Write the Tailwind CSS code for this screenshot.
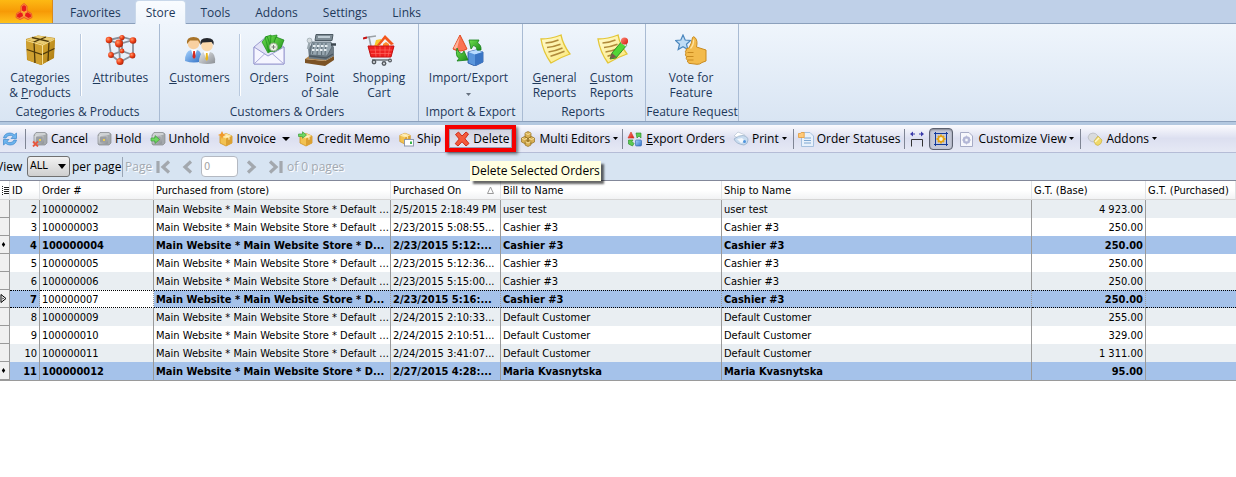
<!DOCTYPE html>
<html lang="en">
<head>
  <meta charset="UTF-8" />
  <title>Store Manager - Orders</title>
  <meta name="viewport" content="width=device-width, initial-scale=1" />
  <script src="https://cdn.jsdelivr.net/npm/@tailwindcss/browser@4"></script>
</head>
<body class="bg-white min-h-screen font-['Open_Sans','Noto_Sans',sans-serif] text-xs text-[#1e395b] overflow-x-hidden">

  <!-- Icon gradients -->
  <svg class="absolute w-0 h-0" aria-hidden="true">
    <defs>
      <linearGradient id="gold" x1="0" y1="0" x2="1" y2="1"><stop offset="0" stop-color="#dcae35" /><stop offset="1" stop-color="#a8770f" /></linearGradient>
      <radialGradient id="ball" cx=".35" cy=".35" r=".7"><stop offset="0" stop-color="#ff9a6a" /><stop offset=".5" stop-color="#f2441a" /><stop offset="1" stop-color="#a92208" /></radialGradient>
      <linearGradient id="silver" x1="0" y1="0" x2="1" y2="1"><stop offset="0" stop-color="#e4e6e8" /><stop offset="1" stop-color="#8b8f94" /></linearGradient>
      <linearGradient id="green" x1="0" y1="0" x2="1" y2="1"><stop offset="0" stop-color="#6fe04f" /><stop offset="1" stop-color="#1c8c1a" /></linearGradient>
      <linearGradient id="red" x1="0" y1="0" x2="1" y2="1"><stop offset="0" stop-color="#ff8a78" /><stop offset="1" stop-color="#d5180c" /></linearGradient>
      <linearGradient id="blue" x1="0" y1="0" x2="1" y2="1"><stop offset="0" stop-color="#a8d4ff" /><stop offset="1" stop-color="#2f6fc4" /></linearGradient>
      <linearGradient id="note" x1="0" y1="0" x2="1" y2="1"><stop offset="0" stop-color="#fffbd0" /><stop offset="1" stop-color="#fbe778" /></linearGradient>
      <symbol id="i-box" viewBox="0 0 16 16">
        <path d="M2 5 8 2.500l6 2.500v7L8 15l-6-3z" fill="#f2c251" stroke="#cf9526" stroke-width=".8" />
        <path d="M2 5l6 2.500L14 5 8 2.500z" fill="#fde6a0" />
        <path d="M8 7.500 14 5v7l-6 3z" fill="#dca132" />
        <path d="M5 3.800 11 6.200v2.500" fill="none" stroke="#fff4cf" />
      </symbol>
      <symbol id="i-safe" viewBox="0 0 16 16">
        <path d="M2 4 4 1.500h9L15 3v9l-2 2H3l-1-1z" fill="#a4a8ab" stroke="#868a8e" stroke-width=".7" />
        <path d="M2.500 4 4.300 2h8.500L14 3.200 12.500 4z" fill="#cfd2d4" />
        <rect x="2.500" y="4" width="9.500" height="9" rx="1.500" fill="url(#silver)" />
        <rect x="4" y="5.500" width="6.500" height="6" rx="1" fill="#9b9ea1" />
        <rect x="7" y="8" width="2" height="2" fill="#f1cf4e" />
      </symbol>
      <symbol id="i-note" viewBox="0 0 32 32">
        <path d="M2 5Q12 5 22 1q2 10 9 19-9 3-19 9Q4 18 2 5z" fill="url(#note)" stroke="#e3c637" stroke-width="1.300" />
        <path d="M6.500 9q7-.5 13-3M8 13.500q7-.7 13.500-3.200M9.500 18q7-1 14-4M11.500 22.300q7-2.200 14-5" fill="none" stroke="#b08a3a" stroke-width="1.500" />
      </symbol>
    </defs>
  </svg>

  <!-- Ribbon tabs -->
  <nav class="flex h-6 gap-[3px] bg-[#bfd0e8] border-b border-[#8ba0bc]">
    <button aria-label="Application menu" class="w-[53px] h-[23px] mr-[3px] flex items-center justify-center pr-1 bg-linear-to-b from-[#fdb913] via-[#f79a06] to-[#ffc21c] border-r border-[#d98a1d]">
      <svg class="w-[18px] h-[18px]" viewBox="0 0 18 18">
        <g fill="#f6953a" stroke="#ee5a2a"><path d="M6 8V3l3-2.500L12 3v5l4.500 2.500.5 4-4 2-4-2-4 2-4-2 .5-4z" /></g>
        <g fill="#e81c1c"><path d="M7 7.500v-4L9 2l2 1.500v4L9 9z" /><path d="M7.500 10.500 8 13l-3.500 2L2 13.800l.3-2.600L5.500 9.200z" /><path d="M10.500 10.500 10 13l3.500 2 2.500-1.200-.3-2.600-3.200-2z" /></g>
        <path d="M9 9.500V13M9 9.500 6.500 8M9 9.500 11.500 8" stroke="#ffb52a" fill="none" />
      </svg>
    </button>
    <button class="h-6 px-[11px] pt-0.5">Favorites</button>
    <button class="h-6 px-2.5 pt-px rounded-t bg-linear-to-b from-[#f9fcff] to-[#eff5fc] border-x border-t border-[#c9d8ea]">Store</button>
    <button class="h-6 px-[11px] pt-0.5">Tools</button>
    <button class="h-6 px-[11px] pt-0.5">Addons</button>
    <button class="h-6 px-[11px] pt-0.5">Settings</button>
    <button class="h-6 px-[11px] pt-0.5">Links</button>
  </nav>

  <!-- Ribbon -->
  <div class="flex h-[98px] bg-linear-to-b from-[#eff5fc] to-[#d9e5f3] border-b border-[#8ba0bc] leading-[15px]">

    <section class="w-40 flex flex-col border-r border-[#a9bbd3] pt-2.5">
      <div class="flex h-[70px]">
        <button class="w-20 flex flex-col items-center gap-1">
          <svg class="w-8 h-8" viewBox="0 0 32 32">
            <path d="M2 5 14 1.500 31 4l-1 20-13 7L3 26z" fill="#b98718" />
            <path d="M2 5.500 14 1.500l17 3-12 6z" fill="#e9cc72" />
            <path d="M2 5.500l17 5L17 31 3.500 26z" fill="#cfa030" />
            <path d="M19 10.500 31 4.500 29.500 24 17 31z" fill="url(#gold)" />
            <path d="M8 3.500 25 7.500l-1 19.500M22 3 10 8l1 21M2.800 15.500 18 20.500l12.500-6" fill="none" stroke="#4f3a0a" stroke-width="1.300" />
            <path d="M2.500 6.500 18.500 11.200 30.500 5.200M18.500 11v19" fill="none" stroke="#f9e6a0" stroke-width=".9" />
          </svg>
          <span>Categories<br />&amp; <u>P</u>roducts</span>
        </button>
        <div class="w-px h-[62px] bg-[#b9c9de] border-r border-white box-content"></div>
        <button class="w-[77px] flex flex-col items-center gap-1">
          <svg class="w-8 h-8" viewBox="0 0 32 32">
            <g stroke="#8a9099" stroke-width="1.800" fill="none">
              <path d="M4 6 17 3l11 3-14 4zM4 6l2 15 9 7 13-7V6M14 10l1 18M17 3v14L6 21M17 17l11 4" />
            </g>
            <g fill="url(#ball)">
              <circle cx="17" cy="3.500" r="2.600" /><circle cx="17" cy="17" r="2.400" /><circle cx="4" cy="6" r="3.300" /><circle cx="28" cy="6.500" r="3.300" />
              <circle cx="6" cy="21" r="2.900" /><circle cx="27.500" cy="21.500" r="2.900" /><circle cx="14" cy="9.500" r="4" /><circle cx="15" cy="27.500" r="3.600" />
            </g>
          </svg>
          <span><u>A</u>ttributes</span>
        </button>
      </div>
      <div class="text-center pr-1">Categories &amp; Products</div>
    </section>

    <section class="w-[259px] flex flex-col border-r border-[#a9bbd3] pt-2.5">
      <div class="flex h-[70px]">
        <button class="w-[79px] flex flex-col items-center gap-1">
          <svg class="w-8 h-8" viewBox="0 0 32 32">
            <path d="M1 27q0-10 6-11h6q5 1 5 11-8 3-17 0z" fill="url(#blue)" />
            <path d="M7 15.500l3 9 3-9z" fill="#fff" /><path d="M9.300 17h1.600l.7 6-1.600 2-1.500-2z" fill="#d7261b" />
            <circle cx="9.500" cy="9.500" r="5.800" fill="#f8d0a0" />
            <path d="M3 10Q2 3 9.500 3T16 10l-2-3.500H6z" fill="#a8742a" />
            <path d="M15 29q0-10 5-11h6q6 1 5 11-8 2-16 0z" fill="url(#silver)" />
            <path d="M19.500 17.500l3.200 9 3.300-9z" fill="#fff" /><path d="M22 19h1.600l.6 6-1.400 2-1.400-2z" fill="#e9b61c" />
            <circle cx="23" cy="11.500" r="5.800" fill="#fbd9ac" />
            <path d="M16.500 11Q15 4 23 4t6.500 7l-2-3-9 .5z" fill="#25282d" />
          </svg>
          <span><u>C</u>ustomers</span>
        </button>
        <div class="w-px h-[62px] bg-[#b9c9de] border-r border-white box-content"></div>
        <button class="w-14 flex flex-col items-center gap-1">
          <svg class="w-8 h-8" viewBox="0 0 32 32">
            <path d="M1 13 13 3l18 10v17H1z" fill="#e2e2f6" stroke="#9a9ad0" />
            <path d="M9 8 14 2l5 14-4 3zM12 3l6-2 4 15-6 2z" fill="url(#green)" stroke="#1c8c1a" stroke-width=".7" />
            <path d="M18 2l6-1-2 14-5 2z" fill="url(#green)" stroke="#1c8c1a" stroke-width=".7" />
            <path d="M23 3l8 3-5 13-8-2z" fill="url(#green)" stroke="#158014" stroke-width=".7" />
            <circle cx="20.500" cy="13" r="4" fill="#e9f4e3" stroke="#98ac90" /><path d="M18.500 13h4M20.500 11v4" stroke="#777" />
            <path d="M1 13l14 9 16-9v17H1z" fill="#f5f5ff" stroke="#9a9ad0" />
            <path d="M1 30 12 19.500M31 30 19 19.500" stroke="#a9a9d8" />
          </svg>
          <span>O<u>r</u>ders</span>
        </button>
        <button class="w-[46px] flex flex-col items-center gap-1">
          <svg class="w-8 h-8" viewBox="0 0 32 32">
            <path d="M1 25l20 2 9-5v4l-9 6-20-3z" fill="#7c5325" /><path d="M1 25 8 20l22 2-9 5z" fill="#b4874e" />
            <path d="M4 14 9 9h17l4 4v9l-8 4-17-1.500z" fill="#6f7c86" />
            <path d="M12 .5h17l-1 6H11z" fill="#7f8d96" stroke="#4d5a63" /><path d="M14 3h12" stroke="#d6e3ea" stroke-width="1.500" />
            <path d="M8 8h19l1 5-5 9-17-1z" fill="#97a6b0" stroke="#56646e" stroke-width=".8" />
            <path d="M10 9l-1.500 11M14 9l-1 12M18 9l-.5 12M22 9l-1 12" stroke="#5d6c76" />
            <path d="M9 12h16M8 16h15" stroke="#e6edf1" stroke-width="1.800" stroke-dasharray="2.500 1.500" />
            <path d="M6 7 4 15" stroke="#9aa7af" stroke-width="2.500" /><circle cx="5.500" cy="6.500" r="2.400" fill="#d3dade" stroke="#8b989f" stroke-width=".6" />
            <path d="M27 10.500h5" stroke="#3c4750" stroke-width="2.500" />
            <path d="M5 22l17 2 7-4" fill="none" stroke="#4c5861" stroke-width="1.300" />
          </svg>
          <span>Point<br />of Sale</span>
        </button>
        <button class="w-[72px] flex flex-col items-center gap-1">
          <svg class="w-8 h-8" viewBox="0 0 32 32">
            <path d="M1 4l5-1 4 19h18" fill="none" stroke="#9aa0a6" stroke-width="1.600" /><path d="M0 4.500l4-1" stroke="#c81414" stroke-width="2" />
            <path d="M6 3 13 2" stroke="#9aa0a6" stroke-width="1.500" />
            <path d="M11 13 13 6l5-1 1 8z" fill="#f9c82a" />
            <path d="M16 11 24 2l7 8-3 6H17z" fill="#f3f3f3" /><path d="M14 11 22 1l9 9-3 1-6-6-5 6z" fill="#f2561d" /><path d="M20 14v-4l3-2 3 2v4z" fill="#ff8a2d" />
            <path d="M5 12h26l-3 11H8z" fill="#ee2020" stroke="#c41010" />
            <path d="M7 16h22M8 19.500h20M12 12.500l1 10M17 12.500v10M22 12.500v10M27 12.500l-2 10" stroke="#ff6a62" stroke-width=".7" />
            <path d="M9 26h18" stroke="#8a9096" stroke-width="2" />
            <g fill="#555a60"><circle cx="11" cy="28" r="2.400" /><circle cx="21" cy="29.500" r="2.400" /><circle cx="27" cy="26.500" r="2" /></g>
            <g fill="#dfe3e6"><circle cx="11" cy="28" r="1" /><circle cx="21" cy="29.500" r="1" /><circle cx="27" cy="26.500" r=".8" /></g>
          </svg>
          <span>Shopping<br />Cart</span>
        </button>
      </div>
      <div class="text-center pr-1">Customers &amp; Orders</div>
    </section>

    <section class="w-[104px] flex flex-col border-r border-[#a9bbd3] pt-2.5">
      <div class="flex justify-center h-[70px] pr-1">
        <button class="flex flex-col items-center gap-1">
          <svg class="w-8 h-8" viewBox="0 0 32 32">
            <path d="M8 1 15 15q-7 4-14 0z" fill="#fa7352" stroke="#e0481e" />
            <path d="M8 2 5 15q-2 0-3.500-.7z" fill="#ffb39c" />
            <path d="M16 18l8-2 7 2v10l-8 4-7-3z" fill="#5a96dc" stroke="#1d4fa0" stroke-width=".8" /><path d="M16 18l7 2.500 8-2.500-7-2z" fill="#b9dcff" /><path d="M23 20.500V31.500l8-3.500V18z" fill="#3a75c4" />
            <path d="M17 6h10l-1.500 3q4 2 3.500 7h-4q0-4-3.500-4.500L19 15z" fill="url(#green)" stroke="#16801a" stroke-width=".8" />
            <path d="M5 14q1 5 5 6l2-3 4 9-11 1 2-2.500Q3 22 5 14z" fill="url(#green)" stroke="#16801a" stroke-width=".8" />
          </svg>
          <span>Import/Export</span>
          <svg class="w-[5px] h-[3px] mt-1" viewBox="0 0 5 3"><path d="M0 0h5L2.500 3z" fill="#66717f" /></svg>
        </button>
      </div>
      <div class="text-center">Import &amp; Export</div>
    </section>

    <section class="w-[123px] flex flex-col border-r border-[#a9bbd3] pt-2.5">
      <div class="flex justify-center h-[70px] pr-0.5">
        <button class="w-[57px] flex flex-col items-center gap-1">
          <svg class="w-8 h-8"><use href="#i-note" /></svg>
          <span><u>G</u>eneral<br />Reports</span>
        </button>
        <button class="w-[57px] flex flex-col items-center gap-1">
          <svg class="w-8 h-8" viewBox="0 0 32 32">
            <use href="#i-note" width="32" height="32" />
            <path d="M14 25l2-6L26 7l5 4-11 13z" fill="#52d636" stroke="#1c7a18" stroke-width=".8" />
            <path d="M14 25l2-6 4.500 4z" fill="#7a5a4a" />
            <path d="M24.500 8.500 26 7l5 4-1.300 1.500z" fill="#dfe3e6" />
            <circle cx="28.500" cy="7" r="3.600" fill="url(#red)" />
          </svg>
          <span><u>C</u>ustom<br />Reports</span>
        </button>
      </div>
      <div class="text-center pr-0.5">Reports</div>
    </section>

    <section class="w-[93px] flex flex-col border-r border-[#a9bbd3] pt-2.5">
      <div class="flex justify-center h-[70px] pr-0.5">
        <button class="flex flex-col items-center gap-1">
          <svg class="w-8 h-8" viewBox="0 0 32 32">
            <path d="M8 1l2.200 5 5.300.5-4 3.700 1.300 5.300L8 12.800 3.200 15.500l1.300-5.300-4-3.700L5.800 6z" fill="#bfdcf5" stroke="#4a86bd" stroke-width="1.200" />
            <path d="M11 16q0-2 3-2 3-5 3.500-10.500Q18 2 20 3.500q3 3 1.500 9.500l9.500 3v11l-4 1.500q-2 2-5 1.800l-8-1q-2-1-1.500-3-2-1.500-1-3.500-2-2-.5-3.800-1.500-2 .5-3z" fill="#f3bb4c" stroke="#c98a1e" stroke-width="1" />
            <path d="M12.500 18.500h6M12 22.500h6.500M13 26h5.500" stroke="#c98a1e" /><path d="M18.500 5.500q.5 5-3 9" fill="none" stroke="#ffe3a0" stroke-width="1.300" />
          </svg>
          <span>Vote for<br />Feature</span>
        </button>
      </div>
      <div class="text-center whitespace-nowrap">Feature Request</div>
    </section>
  </div>

  <!-- Orders toolbar -->
  <div class="flex items-center h-[31px] pl-0.5 bg-linear-to-b from-[#fbfbfe] via-[#dcdff0] to-[#e6e9f5] border-t-3 border-t-[#b3c8e0] border-b border-b-[#b5bcd6] text-black whitespace-nowrap" role="toolbar">
    <button aria-label="Refresh" class="w-[18px]">
      <svg class="w-4 h-4" viewBox="0 0 16 16">
        <path d="M1.500 7Q2.500 2 8 2q2.700 0 4.300 1.800L14.500 2v5.500H9l2-2Q9.800 4.300 8 4.300 5 4.300 4 7z" fill="#6db4ee" stroke="#3e86cc" stroke-width=".7" />
        <path d="M14.500 9q-1 5-6.500 5-2.700 0-4.300-1.800L1.500 14V8.500H7l-2 2q1.200 1.200 3 1.200 3 0 4-2.700z" fill="#6db4ee" stroke="#3e86cc" stroke-width=".7" />
      </svg>
    </button>
    <div class="w-px h-5 bg-[#7f8594] ml-[5px] mr-0.5"></div>
    <button class="flex items-center gap-[3px] px-1">
      <svg class="w-4 h-4" viewBox="0 0 16 16"><use href="#i-safe" width="16" height="16" /><path d="M1 10.500l5 5M6 10.500l-5 5" stroke="#e8573f" stroke-width="1.800" /></svg>Cancel
    </button>
    <button class="flex items-center gap-[3px] px-1">
      <svg class="w-4 h-4"><use href="#i-safe" /></svg>Hold
    </button>
    <button class="flex items-center gap-[3px] px-1">
      <svg class="w-4 h-4" viewBox="0 0 16 16"><use href="#i-safe" width="16" height="16" /><path d="M1 7h4V4.500L9.500 8.500 5 12.500V10H1z" fill="#6fd961" stroke="#3f9c3c" stroke-width=".7" /></svg>Unhold
    </button>
    <button class="flex items-center gap-[3px] px-1">
      <svg class="w-4 h-4" viewBox="0 0 16 16"><use href="#i-box" width="16" height="16" /><path d="M4 0l1.300 2.700L8 4 5.300 5.300 4 8 2.700 5.300 0 4l2.700-1.300z" fill="#f09a2c" /></svg>Invoice
    </button>
    <button aria-label="Invoice options" class="w-2 mx-0.5"><svg class="w-2 h-1" viewBox="0 0 8 4"><path d="M0 0h8L4 4z" /></svg></button>
    <button class="flex items-center gap-[3px] pl-1.5 pr-1">
      <svg class="w-4 h-4" viewBox="0 0 16 16"><use href="#i-box" width="16" height="16" /><path d="M.5 3h4V.8L8.500 4l-4 3.200V5.500h-4z" fill="#6fd961" stroke="#3f9c3c" stroke-width=".7" /></svg>Credit Memo
    </button>
    <button class="flex items-center gap-[3px] px-1">
      <svg class="w-4 h-4" viewBox="0 0 16 16"><use href="#i-box" width="14" height="14" /><rect x="6.500" y="8.500" width="9" height="6.500" fill="#fff" stroke="#8d98ad" /><path d="M12 10.500h2v2.500h-2z" fill="#39b54a" /></svg>Ship
    </button>
    <div class="relative h-[27px] border-4 border-[#f50000] shadow-[2px_2px_3px_#00000080] flex">
      <button class="flex items-center gap-[3px] pl-1 pr-0.5 border border-[#9a9db2] bg-linear-to-b from-[#d2d3e0] to-[#e6e7f3]" aria-describedby="delete-tip">
        <svg class="w-4 h-4" viewBox="0 0 16 16"><path d="M1.500 3.500 4.500 1 8 5l4-4 2.500 2L11 7.800l4 4.700-3 2.500-4-4.200L4 15l-2.800-2.300 4-4.700z" fill="#f45a3c" stroke="#c9220f" stroke-width=".9" /></svg>Delete
      </button>
      <div id="delete-tip" role="tooltip" class="absolute left-[21px] top-8 z-10 h-5 px-px leading-[19px] bg-[#ffffe1] shadow-[3px_3px_2px_#00000099]">Delete Selected Orders</div>
    </div>
    <button class="flex items-center gap-[3px] px-1">
      <svg class="w-4 h-4" viewBox="0 0 16 16">
        <g fill="#d9b055" stroke="#94701f" stroke-width=".7"><path d="M5 2l3-1.500L11 2v4L8 7.500 5 6zM1.500 7l3-1.500 3 1.500v4l-3 1.500-3-1.500zM8.500 7l3-1.500 3 1.500v4l-3 1.500-3-1.500zM5 10.500 8 9l3 1.500v3.500L8 15.500 5 14z" /></g>
        <path d="M5.500 2.300 8 3.500l2.500-1.200M2 7.300l2.500 1.200L7 7.300M9 7.300l2.500 1.200L14 7.300M5.500 10.800 8 12l2.500-1.200" fill="none" stroke="#f7e2a0" />
      </svg>Multi Editors
      <svg class="w-[5px] h-[3px]" viewBox="0 0 5 3"><path d="M0 0h5L2.500 3z" /></svg>
    </button>
    <div class="w-px h-5 bg-[#7f8594]"></div>
    <button class="flex items-center gap-[3px] px-1">
      <svg class="w-4 h-4" viewBox="0 0 16 16"><path d="M4 1l3 6H1z" fill="url(#red)" stroke="#d3301c" stroke-width=".6" /><path d="M1.500 9H6l-1 1.500 2 2L5.500 15l-4-2z" fill="#5cc953" stroke="#258a24" stroke-width=".6" /><path d="M9 2h5v5l-2-2-2 2z" fill="#5cc953" stroke="#258a24" stroke-width=".6" /><rect x="8.500" y="9" width="6" height="6" rx="1" fill="url(#blue)" stroke="#2a5fae" stroke-width=".6" /></svg>
      <span><u>E</u>xport Orders</span>
    </button>
    <button class="flex items-center gap-[3px] px-1">
      <svg class="w-4 h-4" viewBox="0 0 16 16"><path d="M1 5l4-4 7 3-2 5z" fill="#fff" stroke="#b8c4d4" stroke-width=".7" /><path d="M1 8q5-4 9-3.500 5 1 5 4.500 0 4-4 5Q3 13 1 8z" fill="#c8dcf0" stroke="#91a9c3" stroke-width=".7" /><path d="M4 8l5-1 3 3-4 2z" fill="#f3f8fd" /><circle cx="11.500" cy="10.500" r="1.500" fill="#4f94dc" /></svg>Print
      <svg class="w-[5px] h-[3px]" viewBox="0 0 5 3"><path d="M0 0h5L2.500 3z" /></svg>
    </button>
    <div class="w-px h-5 bg-[#7f8594] ml-0.5"></div>
    <button class="flex items-center gap-[3px] px-1">
      <svg class="w-4 h-4" viewBox="0 0 16 16"><path d="M3.500 1.500H12L15.500 5v10.500h-12z" fill="#e8f1fb" stroke="#a5c0de" /><path d="M6 7h7M6 9.500h7M6 12h7" stroke="#7fa8d2" /><path d="M.5 2.500h2l.7-1h3v5H.5z" fill="#ffc978" stroke="#e39a3a" stroke-width=".8" /></svg>Order Statuses
    </button>
    <div class="w-px h-5 bg-[#7f8594] mr-1"></div>
    <button aria-label="Fit columns" class="w-4">
      <svg class="w-4 h-4" viewBox="0 0 16 16"><path d="M2.500 15.500v-7h11v7" fill="none" stroke="#333" /><path d="M3 3h3M10 3h3" stroke="#3a3aa8" /><path d="M4 .5v5L1 3zM12 .5v5L15 3z" fill="#3a3aa8" /></svg>
    </button>
    <button aria-label="Best fit" aria-pressed="true" class="ml-1 mr-0.5 w-6 h-[22px] flex items-center justify-center rounded border border-[#5c6170] bg-[#c4c8d8] shadow-[inset_0_1px_2px_#00000055]">
      <svg class="w-4 h-4" viewBox="0 0 16 16"><path d="M2.500 1v14M13.500 1v14M1 2.500h14M1 13.500h14" fill="none" stroke="#123a9c" /><circle cx="8" cy="8" r="2.700" fill="#fbf3d0" stroke="#e5a313" stroke-width="1.600" /><path d="M8 3.500v1.500M8 11v1.500M3.500 8H5M11 8h1.500M5 5l1 1M11 5l-1 1M5 11l1-1M11 11l-1-1" stroke="#e5a313" stroke-width="1.800" /></svg>
    </button>
    <button class="flex items-center gap-[3px] px-1">
      <svg class="w-4 h-4" viewBox="0 0 16 16"><path d="M1.500 1.500h8.500L13.500 5v10.500h-12z" fill="#f6f7fc" stroke="#a6abc6" /><circle cx="7.500" cy="9" r="2.700" fill="none" stroke="#b2b6d6" stroke-width="2" /><path d="M7.500 4.500v9M3 9h9M4.500 6l6 6M10.500 6l-6 6" stroke="#b2b6d6" stroke-width=".8" /><circle cx="7.500" cy="9" r="1.200" fill="#f6f7fc" /></svg>Customize View
      <svg class="w-[5px] h-[3px]" viewBox="0 0 5 3"><path d="M0 0h5L2.500 3z" /></svg>
    </button>
    <div class="w-px h-5 bg-[#7f8594] mx-0.5"></div>
    <button class="flex items-center gap-[3px] px-1">
      <svg class="w-4 h-4" viewBox="0 0 16 16"><path d="M1 6q1-4 5-4 3 0 5 3l-4 6Q2 11 1 6z" fill="#d9dbde" stroke="#adb0b5" stroke-width=".6" /><path d="M7 10 11 5l4 4q0 4-4 5.500-3 0-4-4.500z" fill="#f0d96a" stroke="#c5a93d" stroke-width=".6" /><path d="M8 11l4-4" stroke="#fff8c8" stroke-width="1.500" /></svg>Addons
      <svg class="w-[5px] h-[3px]" viewBox="0 0 5 3"><path d="M0 0h5L2.500 3z" /></svg>
    </button>
  </div>

  <!-- Pager -->
  <form class="flex items-center h-[27px] bg-[#d7e4f2] text-black whitespace-nowrap" onsubmit="return false">
    <label for="perPage" class="w-[27px] -indent-1">View</label>
    <div class="relative">
      <select id="perPage" class="block appearance-none w-[43px] h-[21px] pl-0.5 rounded-[3px] border border-[#707070] bg-linear-to-b from-[#f2f2f2] to-[#cfcfcf] font-['DejaVu_Sans_Condensed'] text-[11px]">
        <option>ALL</option>
        <option>50</option>
        <option>100</option>
      </select>
      <svg class="absolute right-1 top-2 w-2 h-[5px] pointer-events-none" viewBox="0 0 8 5"><path d="M0 0h8L4 5z" /></svg>
    </div>
    <span class="w-[52px] pl-0.5">per page</span>
    <div class="w-px h-5 bg-[#9aa5b4]"></div>
    <label for="pageNo" class="w-[33px] pl-0.5 text-[#a3a9b1] [text-shadow:1px_1px_0_#fff]">Page</label>
    <button aria-label="First page" class="w-[15px]"><svg class="w-[15px] h-[14px]" viewBox="0 0 15 14"><path d="M2 1v12M13 1.500 7 7l6 5.500" fill="none" stroke="#a3a8ae" stroke-width="3.200" /></svg></button>
    <button aria-label="Previous page" class="ml-[11px] w-[11px]"><svg class="w-[11px] h-[14px]" viewBox="0 0 11 14"><path d="M9 1.500 3 7l6 5.500" fill="none" stroke="#a3a8ae" stroke-width="3.200" /></svg></button>
    <input id="pageNo" value="0" disabled class="ml-2 w-[37px] h-[21px] pl-0.5 bg-white border border-[#b4b9c2] rounded-sm text-[#a3a3a3] font-['DejaVu_Sans_Condensed'] text-[11px]" />
    <button aria-label="Next page" class="ml-2 w-[11px]"><svg class="w-[11px] h-[14px]" viewBox="0 0 11 14"><path d="M2 1.500 8 7l-6 5.500" fill="none" stroke="#a3a8ae" stroke-width="3.200" /></svg></button>
    <button aria-label="Last page" class="ml-[11px] w-[15px]"><svg class="w-[15px] h-[14px]" viewBox="0 0 15 14"><path d="M13 1v12M2 1.500 8 7l-6 5.500" fill="none" stroke="#a3a8ae" stroke-width="3.200" /></svg></button>
    <span class="ml-1 text-[#a3a9b1] [text-shadow:1px_1px_0_#fff]">of 0 pages</span>
  </form>

  <!-- Orders grid -->
  <table class="w-full table-fixed border-separate border-spacing-0 border-t border-b border-t-[#83889a] border-b-[#9a9a9a] font-['DejaVu_Sans_Condensed','Noto_Sans',sans-serif] text-[11px] text-black leading-[17px]">
    <colgroup>
      <col class="w-2.5" /><col class="w-[30px]" /><col class="w-[114px]" /><col class="w-[237px]" /><col class="w-[110px]" /><col class="w-[221px]" /><col class="w-[310px]" /><col class="w-[114px]" /><col />
    </colgroup>
    <thead>
      <tr class="h-[19px] text-left whitespace-nowrap bg-linear-to-b from-white from-50% to-[#f0f1f3] *:font-normal *:border-r *:border-b *:border-r-[#e0e2e5] *:border-b-[#d5d5d5] *:pl-0.5">
        <th aria-label="Row state"><svg class="w-[7px] h-[9px]" viewBox="0 0 7 9"><path d="M0 .5h1M0 2.500h1M0 4.500h1M0 6.500h1M0 8.500h1M2 1.500h5M2 3.500h5M2 5.500h5M2 7.500h5" stroke="#222" /></svg></th>
        <th>ID</th>
        <th>Order #</th>
        <th>Purchased from (store)</th>
        <th><span class="flex items-center justify-between pr-1.5">Purchased On<svg class="w-[7px] h-[8px]" viewBox="0 0 7 8"><path d="M3.500 1 .5 7.500h6z" fill="none" stroke="#9a9a9a" /></svg></span></th>
        <th>Bill to Name</th>
        <th>Ship to Name</th>
        <th>G.T. (Base)</th>
        <th>G.T. (Purchased)</th>
      </tr>
    </thead>
    <tbody id="orders"></tbody>
  </table>

  <script>
    const store = 'Main Website * Main Website Store * Default ...';
    const storeBold = 'Main Website * Main Website Store * D...';
    const orders = [
      { id: 2, no: '100000002', date: '2/5/2015 2:18:49 PM', name: 'user test', total: '4 923.00' },
      { id: 3, no: '100000003', date: '2/23/2015 5:08:55...', name: 'Cashier #3', total: '250.00' },
      { id: 4, no: '100000004', date: '2/23/2015 5:12:...', name: 'Cashier #3', total: '250.00', selected: true },
      { id: 5, no: '100000005', date: '2/23/2015 5:12:36...', name: 'Cashier #3', total: '250.00' },
      { id: 6, no: '100000006', date: '2/23/2015 5:15:00...', name: 'Cashier #3', total: '250.00' },
      { id: 7, no: '100000007', date: '2/23/2015 5:16:...', name: 'Cashier #3', total: '250.00', selected: true, current: true },
      { id: 8, no: '100000009', date: '2/24/2015 2:10:33...', name: 'Default Customer', total: '255.00' },
      { id: 9, no: '100000010', date: '2/24/2015 2:10:51...', name: 'Default Customer', total: '329.00' },
      { id: 10, no: '100000011', date: '2/24/2015 3:41:07...', name: 'Default Customer', total: '1 311.00' },
      { id: 11, no: '100000012', date: '2/27/2015 4:28:...', name: 'Maria Kvasnytska', total: '95.00', selected: true }
    ];

    const mark = `<svg class="w-[7px] h-[7px]" viewBox="0 0 7 7"><path d="M3.500 1 5.200 3.500 3.500 6 1.800 3.500z"/></svg>`;
    const pointer = `<svg class="w-[7px] h-[9px]" viewBox="0 0 7 9"><path d="M1 .5v8l5-4z" fill="none" stroke="#000"/><path d="M2.500 3.500v2l1.500-1z"/></svg>`;

    document.getElementById('orders').innerHTML = orders.map((o, i) => {
      let row = i % 2 ? 'bg-white' : 'bg-[#e9eef2]';
      if (o.selected) row = 'bg-[#a5c2ea] font-bold';
      const line = o.current ? 'border-y border-y-black border-dotted pt-px leading-[15px]' : '';
      const cell = `pl-0.5 whitespace-nowrap border-r border-r-[#9a9a9a] ${line}`;
      return `<tr class="h-[18px] ${row}">
        <td class="bg-[#f0f0f0] border-r border-b border-[#9a9a9a] leading-none">${o.current ? pointer : o.selected ? mark : ''}</td>
        <td class="${cell} pr-0.5 text-right">${o.id}</td>
        <td class="${cell} ${o.current ? 'bg-white font-normal' : ''}">${o.no}</td>
        <td class="${cell}">${o.selected ? storeBold : store}</td>
        <td class="${cell}">${o.date}</td>
        <td class="${cell}">${o.name}</td>
        <td class="${cell}">${o.name}</td>
        <td class="${cell} pr-0.5 text-right">${o.total}</td>
        <td class="${line}"></td>
      </tr>`;
    }).join('');
  </script>

</body>
</html>
